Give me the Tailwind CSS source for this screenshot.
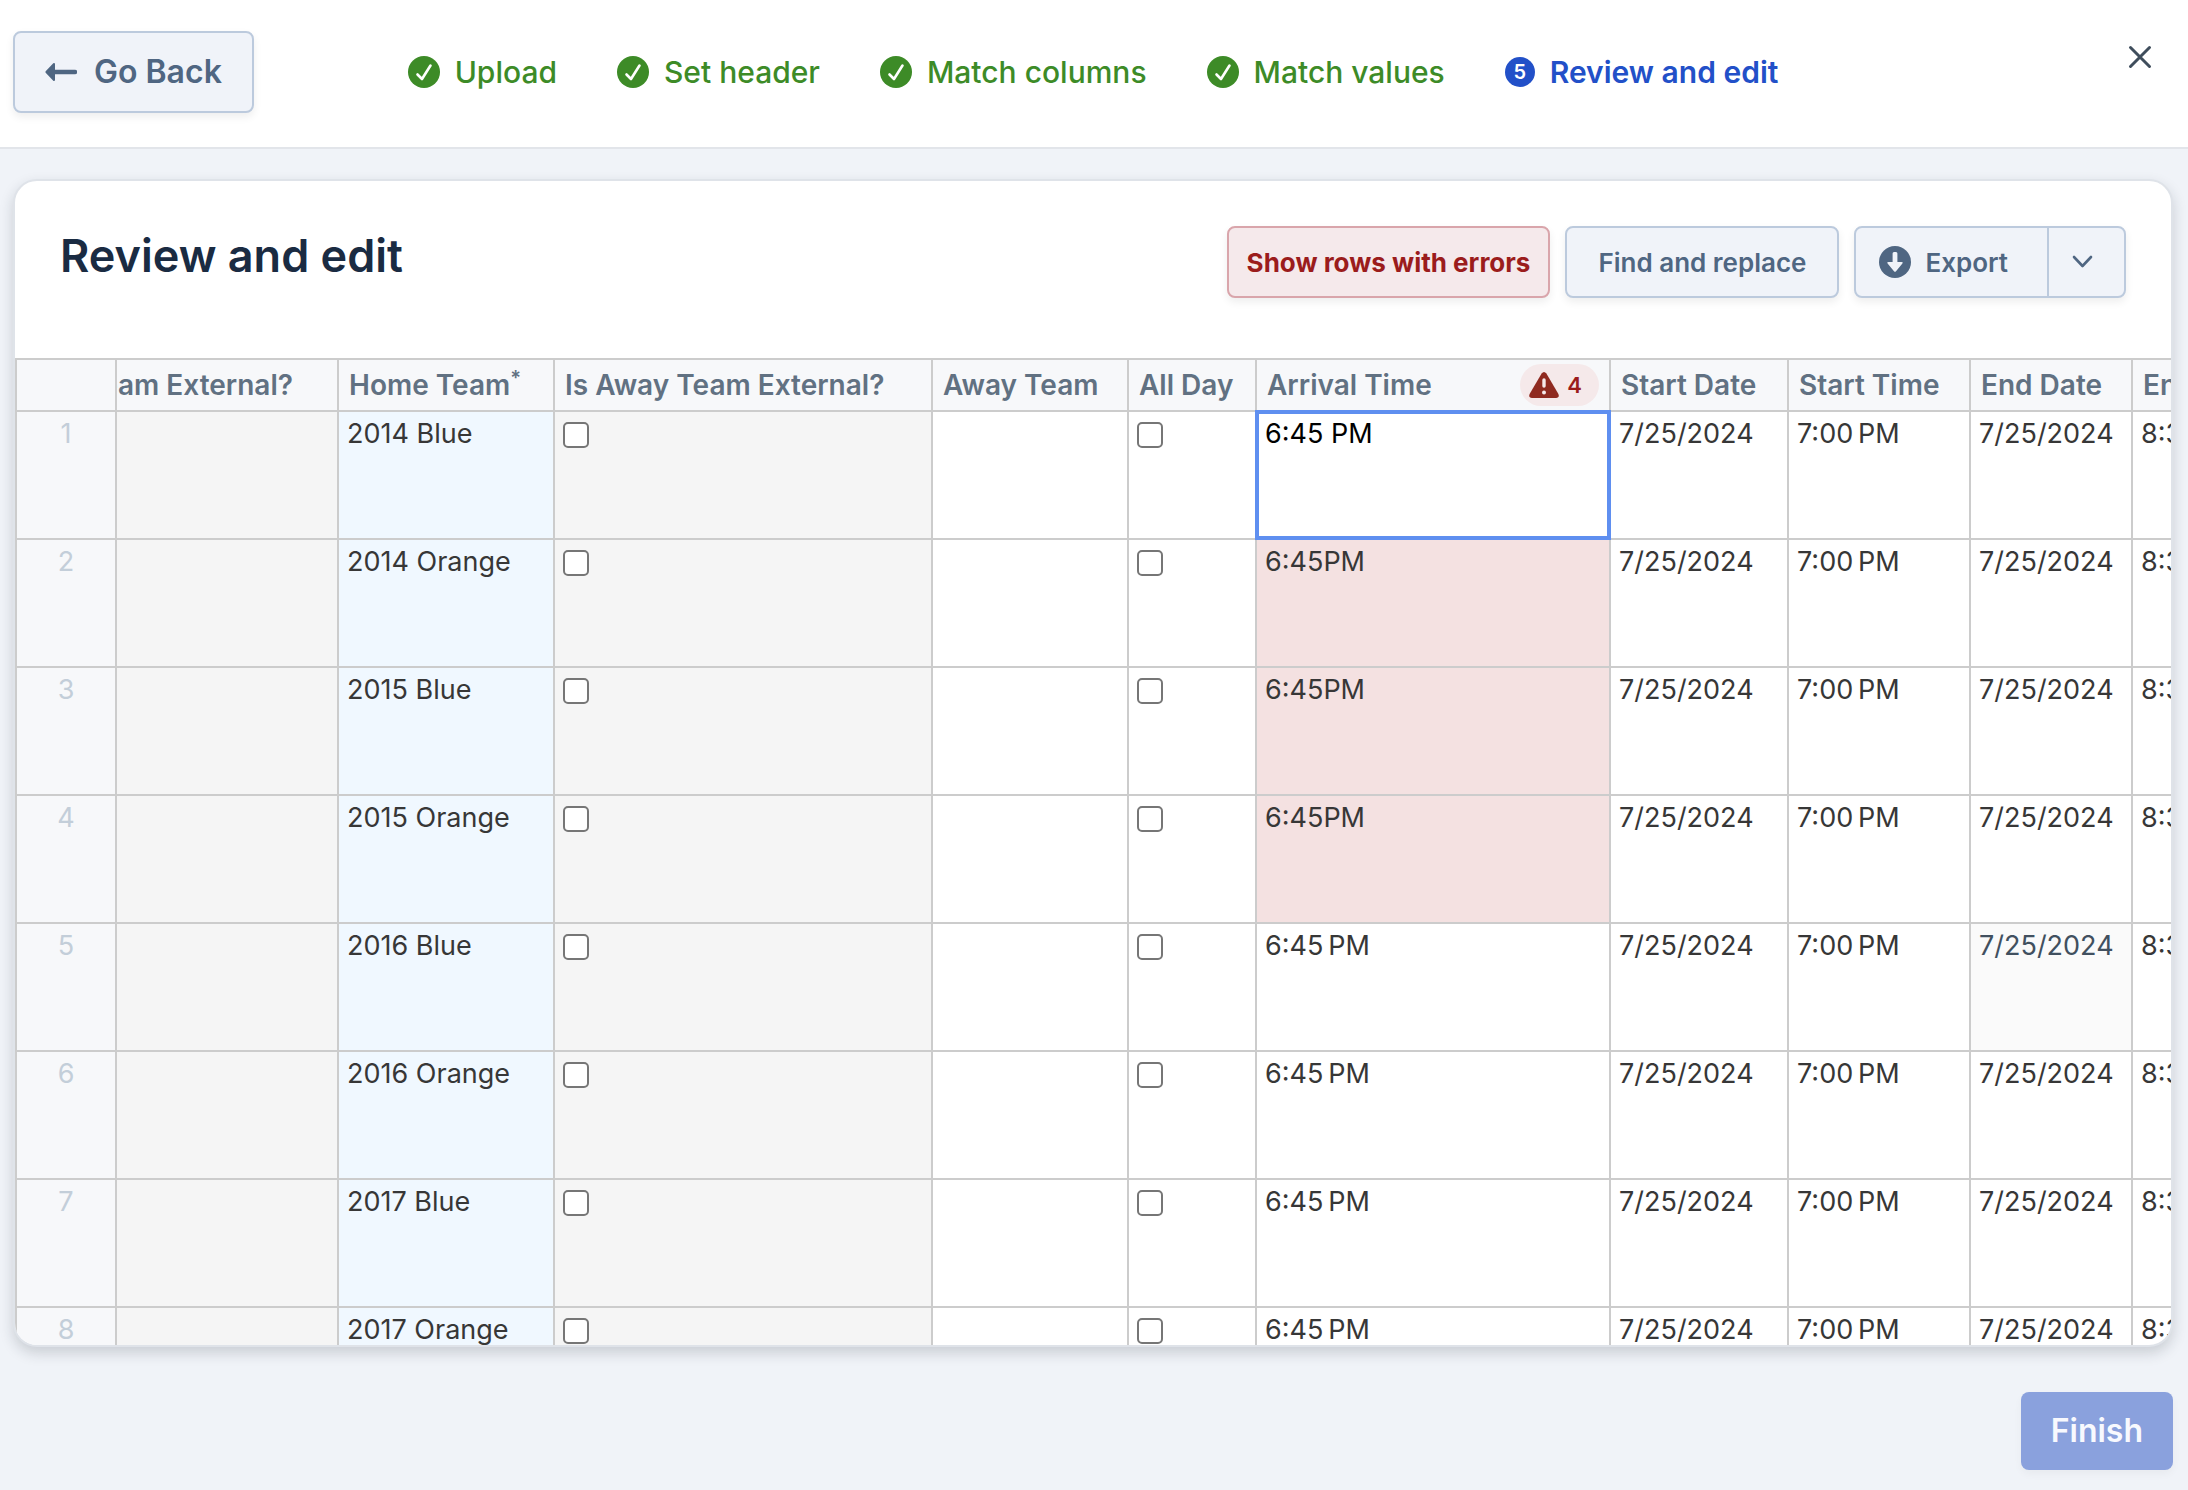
<!DOCTYPE html>
<html lang="en">
<head>
    <meta charset="UTF-8">
    <meta name="viewport" content="width=device-width, initial-scale=1.0">
    <title>Review and edit</title>

    <!-- Tailwind CSS for styling -->
    <script src="https://cdn.jsdelivr.net/npm/@tailwindcss/browser@4"></script>
</head>
<body class="flex h-screen flex-col overflow-hidden bg-[#f0f3f8] font-[Inter,sans-serif]">

    <!-- Header -->
    <header class="grid shrink-0 grid-cols-[1fr_auto_1fr] items-start border-b-2 border-[#e2e5ea] bg-white pt-[31px] pr-[15px] pb-[34px] pl-[13px]">
        <button type="button" class="flex h-[82px] items-center gap-[17px] justify-self-start rounded-lg border-2 border-[#bccadd] bg-[#f0f3f9] px-[30px] text-[32px] font-semibold text-[#4f6682] shadow-[0_4px_8px_rgba(0,0,0,0.07)]">
            <svg class="h-5 w-8" viewBox="0 0 32 20" fill="none" stroke="currentColor">
                <path d="M8 10H30" stroke-width="4.6" stroke-linecap="round"/>
                <path d="M1.4 10L9 2V18Z" fill="currentColor" stroke-width="2" stroke-linejoin="round"/>
            </svg>
            Go Back
        </button>

        <!-- Steps -->
        <nav aria-label="Progress">
            <ol class="flex h-[82px] items-center gap-[60px] text-[30px] font-medium text-[#3d8b27]">
                <li class="flex items-center gap-[15px]">
                    <svg class="size-8" viewBox="0 0 32 32"><circle cx="16" cy="16" r="16" fill="currentColor"/><path d="M9.5 18.5L14 23L22.5 9.5" fill="none" stroke="#fff" stroke-width="2.6" stroke-linecap="round" stroke-linejoin="round"/></svg>
                    Upload
                </li>
                <li class="flex items-center gap-[15px]">
                    <svg class="size-8" viewBox="0 0 32 32"><circle cx="16" cy="16" r="16" fill="currentColor"/><path d="M9.5 18.5L14 23L22.5 9.5" fill="none" stroke="#fff" stroke-width="2.6" stroke-linecap="round" stroke-linejoin="round"/></svg>
                    Set header
                </li>
                <li class="flex items-center gap-[15px]">
                    <svg class="size-8" viewBox="0 0 32 32"><circle cx="16" cy="16" r="16" fill="currentColor"/><path d="M9.5 18.5L14 23L22.5 9.5" fill="none" stroke="#fff" stroke-width="2.6" stroke-linecap="round" stroke-linejoin="round"/></svg>
                    Match columns
                </li>
                <li class="flex items-center gap-[15px]">
                    <svg class="size-8" viewBox="0 0 32 32"><circle cx="16" cy="16" r="16" fill="currentColor"/><path d="M9.5 18.5L14 23L22.5 9.5" fill="none" stroke="#fff" stroke-width="2.6" stroke-linecap="round" stroke-linejoin="round"/></svg>
                    Match values
                </li>
                <li class="flex items-center gap-[15px] font-semibold text-[#2250c8]" aria-current="step">
                    <span class="flex size-[30px] items-center justify-center rounded-full bg-[#2250c8] text-[20px] text-white">5</span>
                    Review and edit
                </li>
            </ol>
        </nav>

        <button type="button" aria-label="Close" class="mr-2 justify-self-end p-[7px] text-[#3f4d5c]">
            <svg class="size-9" viewBox="0 0 36 36" fill="none" stroke="currentColor" stroke-width="3" stroke-linecap="round"><path d="M8.5 9.5L27.5 28.5M27.5 9.5L8.5 28.5"/></svg>
        </button>
    </header>

    <main class="flex min-h-0 flex-1 flex-col pt-[30px] pr-[15px] pb-5 pl-[13px]">

        <!-- Card -->
        <section class="flex min-h-0 flex-1 flex-col overflow-hidden rounded-3xl border-2 border-[#dfe3e9] bg-white shadow-[0_6px_14px_rgba(30,40,50,0.18)]">
            <div class="flex shrink-0 items-start justify-between pt-[45px] pr-[45px] pb-[60px] pl-[45px]">
                <h1 class="text-[45px] leading-[60px] font-semibold text-[#1a2b42]">Review and edit</h1>
                <div class="flex gap-[15px] text-[26px] font-semibold text-[#4f6682]">
                    <button type="button" class="h-[72px] rounded-lg border-2 border-[#d9a5ab] bg-[#f5e9eb] px-[18px] font-bold text-[#9b1c1c] shadow-[0_4px_8px_rgba(0,0,0,0.07)]">Show rows with errors</button>
                    <button type="button" class="h-[72px] rounded-lg border-2 border-[#bccadd] bg-[#f0f3f9] px-[31px] shadow-[0_4px_8px_rgba(0,0,0,0.07)]">Find and replace</button>
                    <div class="flex h-[72px] rounded-lg border-2 border-[#bccadd] bg-[#f0f3f9] shadow-[0_4px_8px_rgba(0,0,0,0.07)]">
                        <button type="button" class="flex items-center gap-[14px] border-r-2 border-[#bccadd] pr-[39px] pl-[23px]">
                            <svg class="size-8" viewBox="0 0 32 32"><circle cx="16" cy="16" r="16" fill="currentColor"/><path d="M13.6 7.5Q13.6 6 15 6H17Q18.4 6 18.4 7.5V16H22.5Q24.6 16 23.2 17.7L17 25.2Q16 26.4 15 25.2L8.8 17.7Q7.4 16 9.5 16H13.6Z" fill="#f0f3f9"/></svg>
                            Export
                        </button>
                        <button type="button" aria-label="Export options" class="pr-[25px] pl-[18px]">
                            <svg class="h-8 w-8" viewBox="0 0 32 32" fill="none" stroke="currentColor" stroke-width="2.6" stroke-linecap="round" stroke-linejoin="round"><path d="M7 11L15.500 20L24 11"/></svg>
                        </button>
                    </div>
                </div>
            </div>

            <!-- Data grid -->
            <div class="min-h-0 flex-1 overflow-hidden">
                <table class="w-full min-w-[2316px] table-fixed border-separate border-spacing-0 border-t-2 border-l-2 border-[#ccc] text-[27px] leading-8 text-[#373737] [&_td]:overflow-hidden [&_td]:border-r-2 [&_td]:border-b-2 [&_td]:border-[#ccc] [&_td]:px-2 [&_td]:align-top [&_th]:overflow-hidden [&_th]:border-r-2 [&_th]:border-b-2 [&_th]:border-[#ccc] [&_th]:bg-[#f7f8fa] [&_th]:whitespace-nowrap">
                    <colgroup>
                        <col class="w-[100px]">
                        <col class="w-[222px]">
                        <col class="w-[216px]">
                        <col class="w-[378px]">
                        <col class="w-[196px]">
                        <col class="w-[128px]">
                        <col class="w-[354px]">
                        <col class="w-[178px]">
                        <col class="w-[182px]">
                        <col class="w-[162px]">
                        <col>
                    </colgroup>
                    <thead>
                        <tr class="h-[52px] text-left text-[28px] text-[#617182] [&_th]:px-[10px] [&_th]:font-semibold">
                            <th aria-label="Row"></th>
                            <th><span class="flex justify-end pr-[34px]">Is Home Team External?</span></th>
                            <th>Home Team<sup class="text-[20px]">*</sup></th>
                            <th>Is Away Team External?</th>
                            <th>Away Team</th>
                            <th>All Day</th>
                            <th>
                                <span class="flex items-center justify-between">
                                    Arrival Time
                                    <span class="flex h-[42px] items-center gap-2 rounded-full bg-[#f5e9ea] pr-[17px] pl-[9px] text-[22px] text-[#9b1c1c]">
                                        <svg class="h-[26px] w-[30px]" viewBox="0 0 30 26"><path d="M12.600 1.500Q15 -1.500 17.400 1.500L29.400 22Q30.800 26 27 26H3Q-0.800 26 0.600 22Z" fill="#8f2a20"/><path d="M15 8V14" stroke="#f5e9ea" stroke-width="3.400" stroke-linecap="round"/><circle cx="15" cy="20.500" r="2" fill="#f5e9ea"/></svg>
                                        4
                                    </span>
                                </span>
                            </th>
                            <th>Start Date</th>
                            <th>Start Time</th>
                            <th>End Date</th>
                            <th>End Time</th>
                        </tr>
                    </thead>
                    <tbody id="rows"></tbody>
                </table>
            </div>
        </section>

        <!-- Footer -->
        <footer class="mt-[45px] flex shrink-0 justify-end">
            <button type="button" class="h-[78px] rounded-lg bg-[#8aa1dd] px-[30px] text-[32px] font-semibold text-[#f8f9fe] shadow-[0_4px_8px_rgba(0,0,0,0.04)]">Finish</button>
        </footer>
    </main>

    <script>
        // arrival: "edit" is the open editor, "error" a value that failed validation
        const rows = [
            { team: '2014 Blue', arrival: '6:45 PM', state: 'edit' },
            { team: '2014 Orange', arrival: '6:45PM', state: 'error' },
            { team: '2015 Blue', arrival: '6:45PM', state: 'error' },
            { team: '2015 Orange', arrival: '6:45PM', state: 'error' },
            { team: '2016 Blue', arrival: '6:45\u202FPM', hover: true },
            { team: '2016 Orange', arrival: '6:45\u202FPM' },
            { team: '2017 Blue', arrival: '6:45\u202FPM' },
            { team: '2017 Orange', arrival: '6:45\u202FPM' },
        ];

        const checkbox = (label) =>
            `<input type="checkbox" aria-label="${label}" class="mt-[10px] block size-[26px] appearance-none rounded-[5px] border-2 border-[#767676] bg-white">`;

        const arrivalCell = (row) => {
            if (row.state === 'edit') {
                return `<td class="relative !overflow-visible"><textarea aria-label="Arrival Time" class="absolute -inset-0.5 resize-none overflow-hidden border-4 border-[#5f8ff0] bg-white px-[6px] pt-1 text-black outline-none">${row.arrival}</textarea></td>`;
            }
            return `<td class="pt-[6px] ${row.state === 'error' ? 'bg-[#f4e1e1]' : ''}">${row.arrival}</td>`;
        };

        document.getElementById('rows').innerHTML = rows.map((row, i) => `
            <tr class="h-[128px]">
                <th class="pt-[6px] text-center align-top font-normal text-[#c3ced9]">${i + 1}</th>
                <td class="bg-[#f5f5f5]"></td>
                <td class="bg-[#f0f8ff] pt-[6px] whitespace-nowrap">${row.team}</td>
                <td class="bg-[#f5f5f5]">${checkbox('Is Away Team External?')}</td>
                <td></td>
                <td>${checkbox('All Day')}</td>
                ${arrivalCell(row)}
                <td class="pt-[6px]">7/25/2024</td>
                <td class="pt-[6px]">7:00\u202FPM</td>
                <td class="pt-[6px] ${row.hover ? 'bg-[#fafafa] text-[#41505f]' : ''}">7/25/2024</td>
                <td class="pt-[6px]">8:30\u202FPM</td>
            </tr>`).join('');
    </script>

</body>
</html>
